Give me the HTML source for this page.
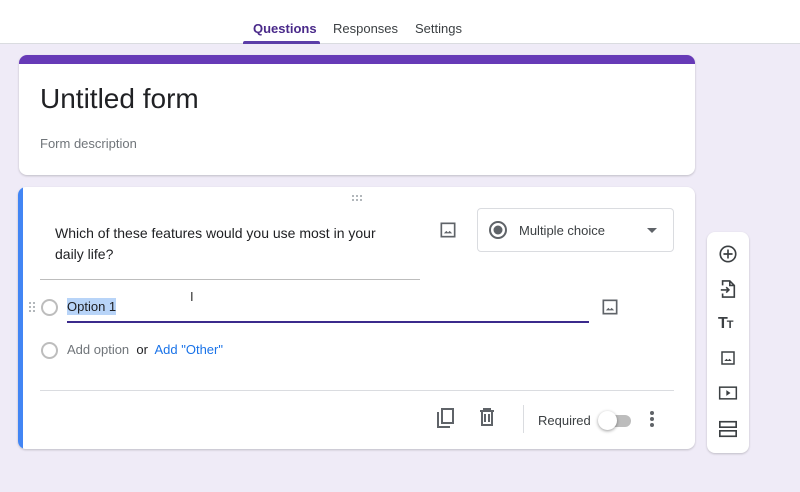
<!DOCTYPE html>
<html><head><style>
*{box-sizing:border-box;margin:0;padding:0}
body{width:800px;height:492px;background:#efebf7;font-family:"Liberation Sans",Arial,sans-serif;position:relative;overflow:hidden;color:#202124}
.hdr{position:absolute;left:0;top:0;width:800px;height:44px;background:#fff;border-bottom:1px solid #dadce0}
.tab{position:absolute;top:21px;font-size:13px;color:#3c4043}
.card{position:absolute;background:#fff;border-radius:8px;box-shadow:0 1px 2px rgba(0,0,0,.2)}
.ab{position:absolute}
svg{position:absolute}
.dot{position:absolute;width:2px;height:2px;background:#9aa0a6;border-radius:1px}
</style></head><body>
<div class="hdr">
<div class="tab" style="left:253px;color:#4a2a8a;font-weight:bold">Questions</div>
<div class="ab" style="left:243px;top:41px;width:77px;height:3px;background:#5b3da8;border-radius:2px 2px 0 0"></div>
<div class="tab" style="left:333px">Responses</div>
<div class="tab" style="left:415px">Settings</div>
</div>

<div class="card" style="left:19px;top:55px;width:676px;height:120px;overflow:hidden">
<div class="ab" style="left:0;top:0;width:100%;height:9px;background:#673ab7"></div>
<div class="ab" style="left:21px;top:28px;font-size:28px;color:#202124">Untitled form</div>
<div class="ab" style="left:21px;top:81px;font-size:13px;color:#70757a">Form description</div>
</div>

<div class="card" style="left:18px;top:187px;width:677px;height:262px;overflow:hidden">
<div class="ab" style="left:0;top:0;width:5px;height:100%;background:#4285f4"></div>
<div class="dot" style="left:334px;top:8px"></div><div class="dot" style="left:338px;top:8px"></div><div class="dot" style="left:342px;top:8px"></div>
<div class="dot" style="left:334px;top:12px"></div><div class="dot" style="left:338px;top:12px"></div><div class="dot" style="left:342px;top:12px"></div>
<div class="ab" style="left:37px;top:36px;width:340px;font-size:14px;line-height:21px;color:#202124">Which of these features would you use most in your daily life?</div>
<div class="ab" style="left:22px;top:92px;width:380px;height:1px;background:#bdbdbd"></div>
<svg style="left:420px;top:33px" width="20" height="20" viewBox="0 0 24 24"><rect x="4" y="4" width="16" height="16" fill="none" stroke="#5f6368" stroke-width="2"/><path d="M7 16l3-3 2 2 2-2 3 3z" fill="#5f6368"/></svg>
<div class="ab" style="left:459px;top:21px;width:197px;height:44px;border:1px solid #dadce0;border-radius:4px"></div>
<svg style="left:470px;top:33px" width="20" height="20" viewBox="0 0 20 20"><circle cx="10" cy="10" r="8" fill="none" stroke="#5f6368" stroke-width="2"/><circle cx="10" cy="10" r="4.5" fill="#5f6368"/></svg>
<div class="ab" style="left:501px;top:36px;font-size:13px;color:#3c4043">Multiple choice</div>
<div class="ab" style="left:629px;top:41px;width:0;height:0;border-left:5px solid transparent;border-right:5px solid transparent;border-top:5px solid #5f6368"></div>

<div class="dot" style="left:11px;top:115px"></div><div class="dot" style="left:15px;top:115px"></div>
<div class="dot" style="left:11px;top:119px"></div><div class="dot" style="left:15px;top:119px"></div>
<div class="dot" style="left:11px;top:123px"></div><div class="dot" style="left:15px;top:123px"></div>
<div class="ab" style="left:23px;top:112px;width:17px;height:17px;border:2px solid #bdbdbd;border-radius:50%"></div>
<div class="ab" style="left:49px;top:111px;font-size:13px;background:#b8d4f8;color:#202124;padding:1px 0">Option 1</div>
<div class="ab" style="left:172px;top:102px;font-size:13px;color:#333">I</div>
<div class="ab" style="left:49px;top:134px;width:522px;height:2px;background:#3b2a8c"></div>
<svg style="left:582px;top:110px" width="20" height="20" viewBox="0 0 24 24"><rect x="4" y="4" width="16" height="16" fill="none" stroke="#5f6368" stroke-width="2"/><path d="M7 16l3-3 2 2 2-2 3 3z" fill="#5f6368"/></svg>

<div class="ab" style="left:23px;top:155px;width:17px;height:17px;border:2px solid #bdbdbd;border-radius:50%"></div>
<div class="ab" style="left:49px;top:155px;font-size:13px;color:#70757a">Add option <span style="color:#202124">&nbsp;or&nbsp;</span> <span style="color:#1a73e8">Add "Other"</span></div>

<div class="ab" style="left:22px;top:203px;width:634px;height:1px;background:#dadce0"></div>
<svg style="left:417px;top:220px" width="20" height="22" viewBox="0 0 20 22"><path d="M3 5v15h12" fill="none" stroke="#5f6368" stroke-width="2"/><rect x="7" y="2" width="11" height="14" fill="none" stroke="#5f6368" stroke-width="2"/></svg>
<svg style="left:460px;top:220px" width="18" height="20" viewBox="0 0 18 20"><path d="M2 4h14M6 4V2h6v2M4 4v14h10V4M7 7v8M11 7v8" fill="none" stroke="#5f6368" stroke-width="2"/></svg>
<div class="ab" style="left:505px;top:218px;width:1px;height:28px;background:#dadce0"></div>
<div class="ab" style="left:520px;top:226px;font-size:13px;color:#3c4043">Required</div>
<div class="ab" style="left:583px;top:228px;width:30px;height:12px;background:#bdbdbd;border-radius:6px"></div>
<div class="ab" style="left:580px;top:224px;width:19px;height:19px;background:#fff;border-radius:50%;box-shadow:0 1px 3px rgba(0,0,0,.4)"></div>
<div class="ab" style="left:632px;top:224px;width:4px;line-height:6px;font-size:0">
<div style="width:4px;height:4px;border-radius:50%;background:#5f6368;margin-bottom:2px"></div><div style="width:4px;height:4px;border-radius:50%;background:#5f6368;margin-bottom:2px"></div><div style="width:4px;height:4px;border-radius:50%;background:#5f6368"></div></div>
</div>

<div class="card" style="left:707px;top:232px;width:42px;height:221px">
<svg style="left:11px;top:12px" width="20" height="20" viewBox="0 0 22 22"><circle cx="11" cy="11" r="8.5" fill="none" stroke="#3c4043" stroke-width="1.8"/><path d="M11 6v10M6 11h10" stroke="#3c4043" stroke-width="1.8"/></svg>
<svg style="left:12px;top:47px" width="18" height="20" viewBox="0 0 20 22"><path d="M4 7V2h8l5 5v13H4v-4M12 2v5h5M2 12h9M8 9l3 3-3 3" fill="none" stroke="#3c4043" stroke-width="1.8"/></svg>
<div class="ab" style="left:11px;top:83px;font-size:16px;font-weight:bold;color:#3c4043;letter-spacing:-1px">T<span style="font-size:11px">T</span></div>
<svg style="left:12px;top:117px" width="18" height="18" viewBox="0 0 24 24"><rect x="4" y="4" width="16" height="16" fill="none" stroke="#3c4043" stroke-width="2"/><path d="M7 16l3-3 2 2 2-2 3 3z" fill="#3c4043"/></svg>
<svg style="left:11px;top:153px" width="20" height="16" viewBox="0 0 24 18"><rect x="2" y="2" width="20" height="14" fill="none" stroke="#3c4043" stroke-width="1.8"/><path d="M10 5.5v7l5-3.5z" fill="#3c4043"/></svg>
<svg style="left:11px;top:187px" width="20" height="20" viewBox="0 0 22 22"><rect x="2" y="3" width="18" height="6" fill="none" stroke="#3c4043" stroke-width="1.8"/><rect x="2" y="13" width="18" height="6" fill="none" stroke="#3c4043" stroke-width="1.8"/></svg>
</div>
</body></html>
